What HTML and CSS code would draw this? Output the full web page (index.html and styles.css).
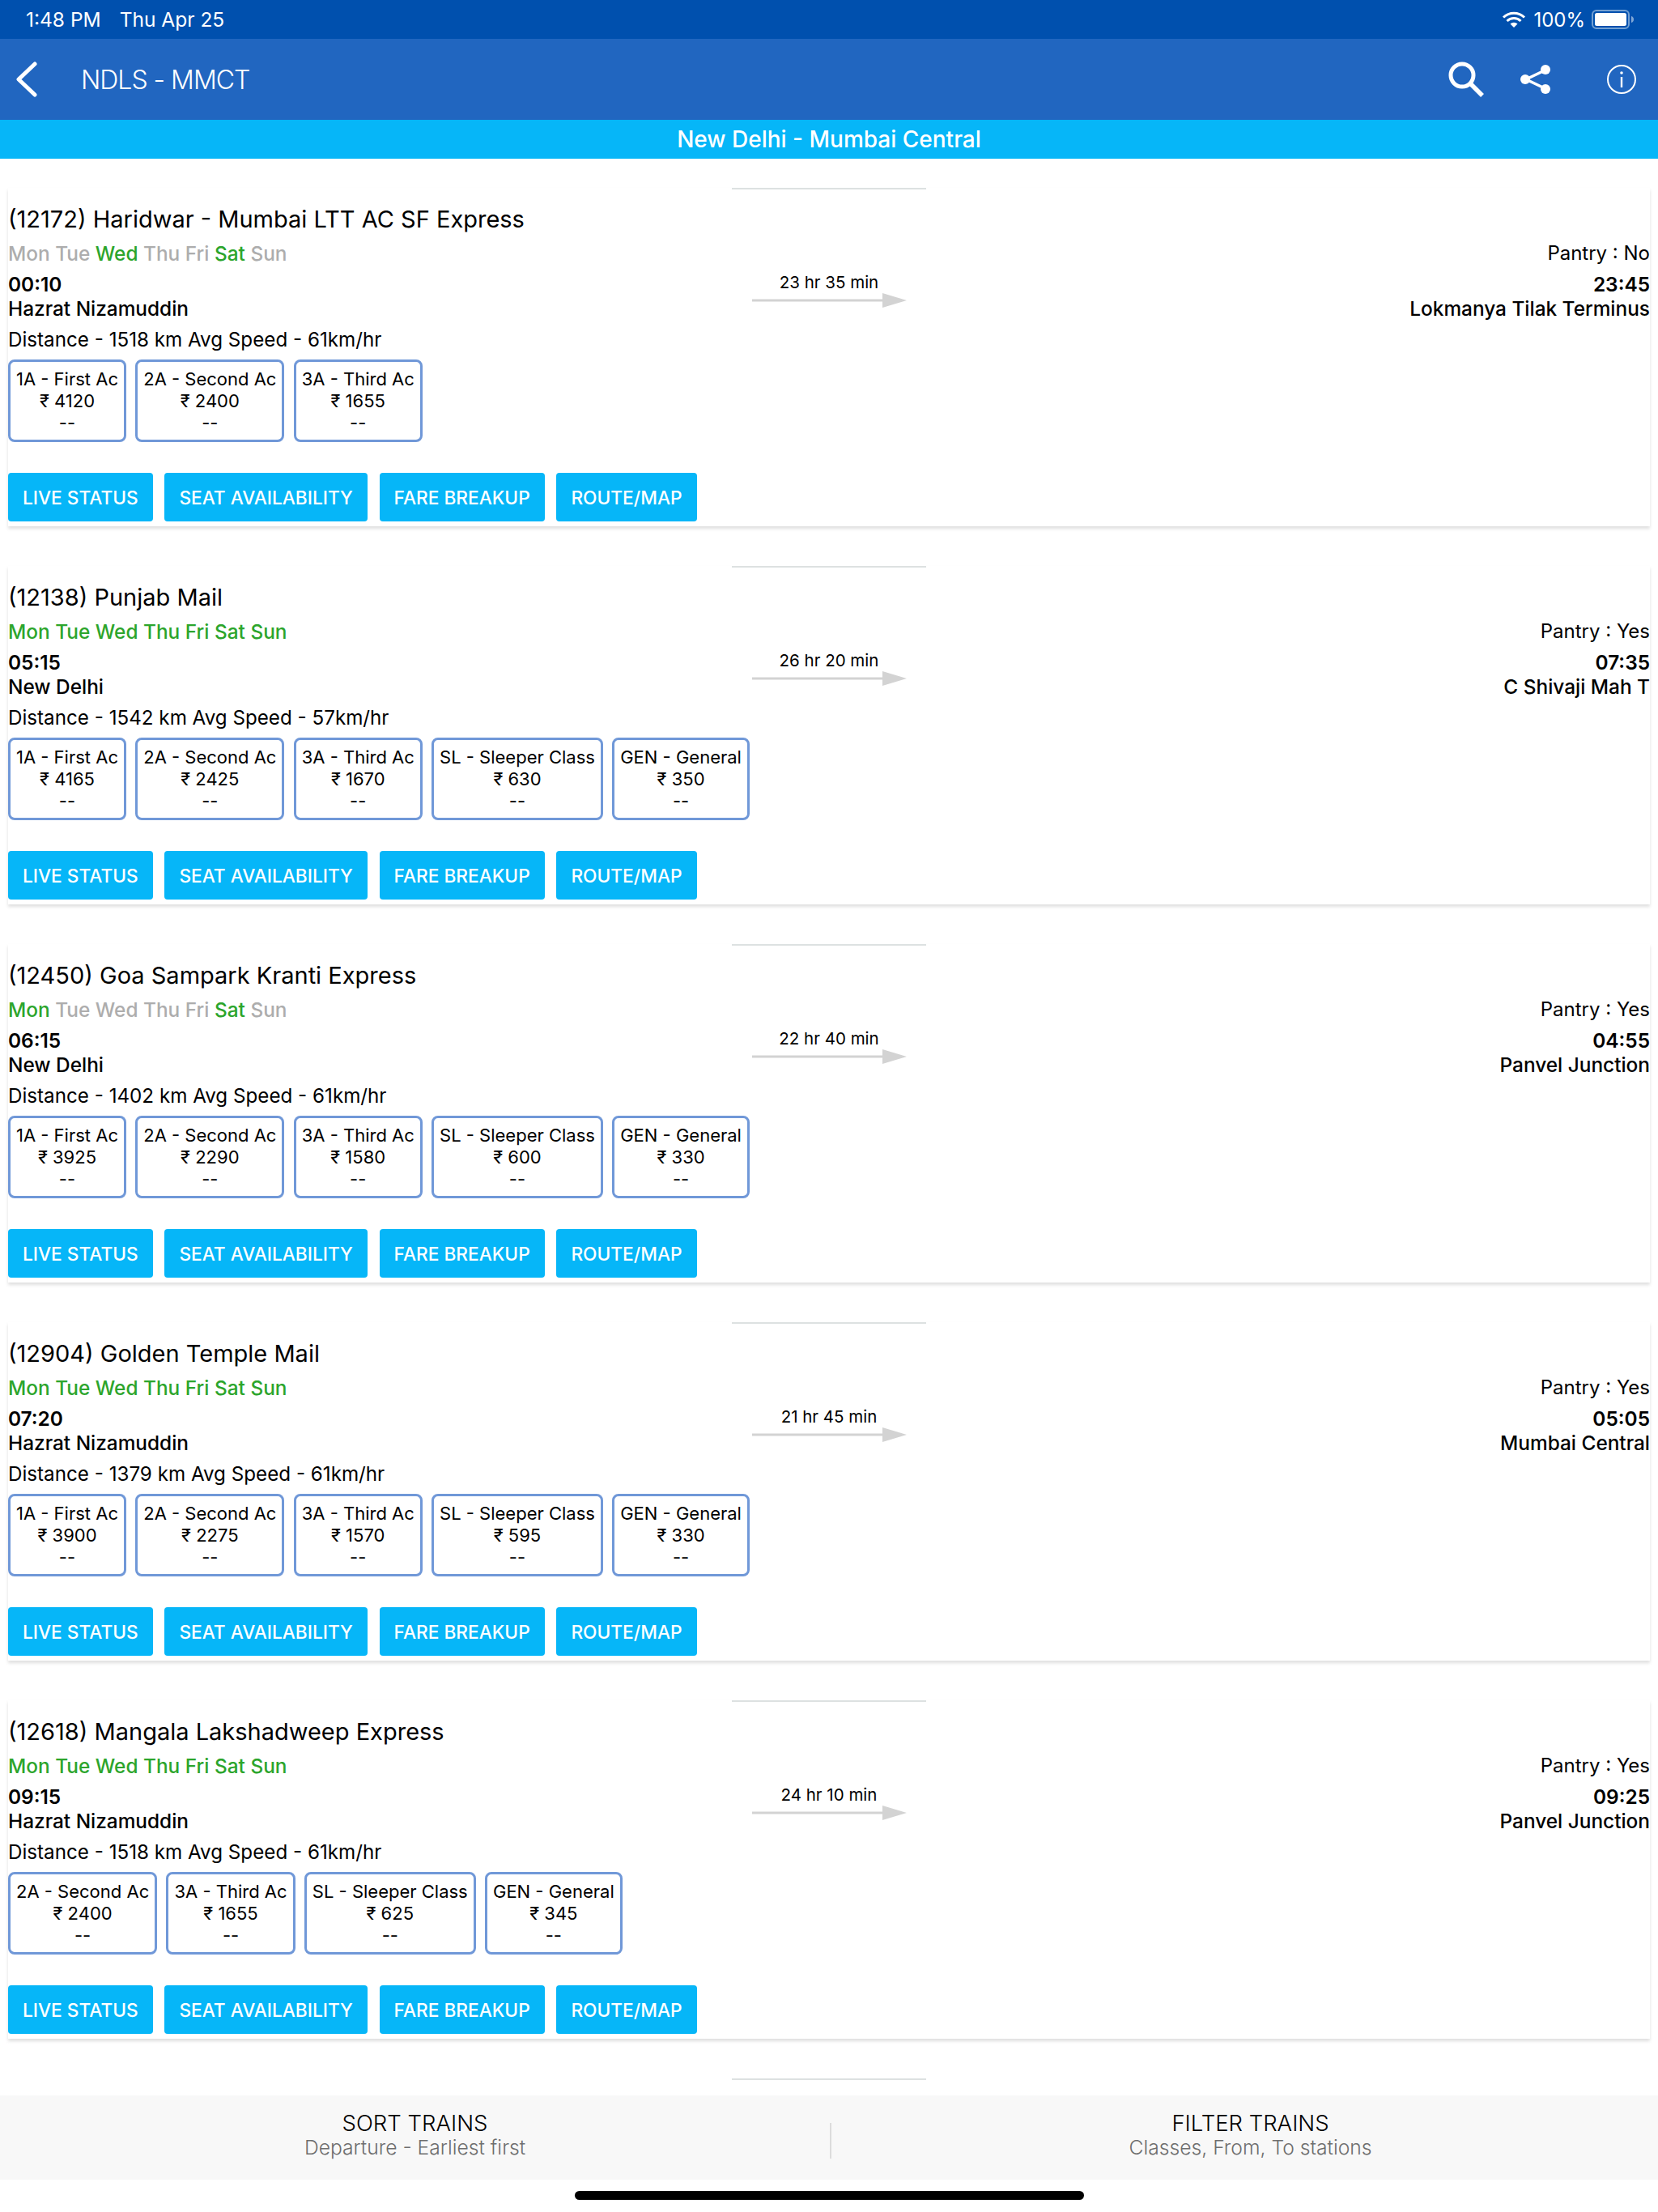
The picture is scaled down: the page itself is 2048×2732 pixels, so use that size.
FILE: index.html
```html
<!DOCTYPE html>
<html lang="en">
<head>
<meta charset="utf-8">
<title>NDLS - MMCT</title>
<link rel="stylesheet" href="styles.css">
</head>
<body>
<div class="app">
  <div class="status">
    <span class="status-time">1:48 PM</span><span class="status-date">Thu Apr 25</span>
    <span class="status-right">
      <svg class="wifi" width="30" height="22" viewBox="0 0 30 22"><path d="M2 8.5a18.5 18.5 0 0 1 26 0M6.500 13a12 12 0 0 1 17 0" fill="none" stroke="#fff" stroke-width="3"/><path d="M10.500 16.500a6.500 6.500 0 0 1 9 0L15 21z" fill="#fff"/></svg>
      <span class="battery-pct">100%</span>
      <svg width="52" height="24" viewBox="0 0 52 24"><rect x="1" y="1" width="45" height="22" rx="5" fill="none" stroke="#fff" stroke-opacity=".45" stroke-width="2"/><rect x="4" y="4" width="39" height="16" rx="2.500" fill="#fff"/><path d="M49 8c2 .5 3 2 3 4s-1 3.500-3 4z" fill="#fff" fill-opacity=".5"/></svg>
    </span>
  </div>
  <div class="nav">
    <svg class="back" width="26" height="44" viewBox="0 0 26 44"><path d="M23 3 3 22l20 19" fill="none" stroke="#fff" stroke-width="5" stroke-linecap="round" stroke-linejoin="round"/></svg>
    <span class="nav-title">NDLS - MMCT</span>
    <svg class="nav-search" width="48" height="48" viewBox="0 0 48 48"><circle cx="20" cy="19" r="14" fill="none" stroke="#fff" stroke-width="5"/><path d="M30 29l15 15" stroke="#fff" stroke-width="5.500"/></svg>
    <svg class="nav-share" width="40" height="38" viewBox="0 0 40 38"><path d="M33 7 8 19l25 12" fill="none" stroke="#fff" stroke-width="3.500"/><circle cx="32" cy="7" r="6" fill="#fff"/><circle cx="7" cy="19" r="6" fill="#fff"/><circle cx="32" cy="31" r="6" fill="#fff"/></svg>
    <svg class="nav-info" width="38" height="38" viewBox="0 0 38 38"><circle cx="19" cy="19" r="17" fill="none" stroke="#fff" stroke-width="2"/><rect x="17.800" y="16" width="2.400" height="13" fill="#fff"/><circle cx="19" cy="11" r="1.800" fill="#fff"/></svg>
  </div>
  <div class="band">New Delhi - Mumbai Central</div>

  <div class="list">
    <article class="card">
      <div class="rule"></div>
      <h2 class="title">(12172) Haridwar - Mumbai LTT AC SF Express</h2>
      <div class="meta">
        <div class="side">
          <div class="days"><span>Mon</span> <span>Tue</span> <span class="on">Wed</span> <span>Thu</span> <span>Fri</span> <span class="on">Sat</span> <span>Sun</span></div>
          <div class="time">00:10</div>
          <div class="station">Hazrat Nizamuddin</div>
        </div>
        <div class="duration"><span>23 hr 35 min</span><svg class="arrow" width="191" height="18" viewBox="0 0 191 18"><path d="M0 7.500h161V0l30 9-30 9v-7.500H0z" fill="#d3d3d3"/></svg></div>
        <div class="side end">
          <div class="pantry">Pantry : No</div>
          <div class="time">23:45</div>
          <div class="station">Lokmanya Tilak Terminus</div>
        </div>
      </div>
      <div class="distance">Distance - 1518 km Avg Speed - 61km/hr</div>
      <div class="chips">
        <div class="chip">1A - First Ac<br>₹ 4120<br>--</div>
        <div class="chip">2A - Second Ac<br>₹ 2400<br>--</div>
        <div class="chip">3A - Third Ac<br>₹ 1655<br>--</div>
      </div>
      <div class="actions"><a class="btn">LIVE STATUS</a><a class="btn">SEAT AVAILABILITY</a><a class="btn">FARE BREAKUP</a><a class="btn">ROUTE/MAP</a></div>
    </article>

    <article class="card">
      <div class="rule"></div>
      <h2 class="title">(12138) Punjab Mail</h2>
      <div class="meta">
        <div class="side">
          <div class="days"><span class="on">Mon</span> <span class="on">Tue</span> <span class="on">Wed</span> <span class="on">Thu</span> <span class="on">Fri</span> <span class="on">Sat</span> <span class="on">Sun</span></div>
          <div class="time">05:15</div>
          <div class="station">New Delhi</div>
        </div>
        <div class="duration"><span>26 hr 20 min</span><svg class="arrow" width="191" height="18" viewBox="0 0 191 18"><path d="M0 7.500h161V0l30 9-30 9v-7.500H0z" fill="#d3d3d3"/></svg></div>
        <div class="side end">
          <div class="pantry">Pantry : Yes</div>
          <div class="time">07:35</div>
          <div class="station">C Shivaji Mah T</div>
        </div>
      </div>
      <div class="distance">Distance - 1542 km Avg Speed - 57km/hr</div>
      <div class="chips">
        <div class="chip">1A - First Ac<br>₹ 4165<br>--</div>
        <div class="chip">2A - Second Ac<br>₹ 2425<br>--</div>
        <div class="chip">3A - Third Ac<br>₹ 1670<br>--</div>
        <div class="chip">SL - Sleeper Class<br>₹ 630<br>--</div>
        <div class="chip">GEN - General<br>₹ 350<br>--</div>
      </div>
      <div class="actions"><a class="btn">LIVE STATUS</a><a class="btn">SEAT AVAILABILITY</a><a class="btn">FARE BREAKUP</a><a class="btn">ROUTE/MAP</a></div>
    </article>

    <article class="card">
      <div class="rule"></div>
      <h2 class="title">(12450) Goa Sampark Kranti Express</h2>
      <div class="meta">
        <div class="side">
          <div class="days"><span class="on">Mon</span> <span>Tue</span> <span>Wed</span> <span>Thu</span> <span>Fri</span> <span class="on">Sat</span> <span>Sun</span></div>
          <div class="time">06:15</div>
          <div class="station">New Delhi</div>
        </div>
        <div class="duration"><span>22 hr 40 min</span><svg class="arrow" width="191" height="18" viewBox="0 0 191 18"><path d="M0 7.500h161V0l30 9-30 9v-7.500H0z" fill="#d3d3d3"/></svg></div>
        <div class="side end">
          <div class="pantry">Pantry : Yes</div>
          <div class="time">04:55</div>
          <div class="station">Panvel Junction</div>
        </div>
      </div>
      <div class="distance">Distance - 1402 km Avg Speed - 61km/hr</div>
      <div class="chips">
        <div class="chip">1A - First Ac<br>₹ 3925<br>--</div>
        <div class="chip">2A - Second Ac<br>₹ 2290<br>--</div>
        <div class="chip">3A - Third Ac<br>₹ 1580<br>--</div>
        <div class="chip">SL - Sleeper Class<br>₹ 600<br>--</div>
        <div class="chip">GEN - General<br>₹ 330<br>--</div>
      </div>
      <div class="actions"><a class="btn">LIVE STATUS</a><a class="btn">SEAT AVAILABILITY</a><a class="btn">FARE BREAKUP</a><a class="btn">ROUTE/MAP</a></div>
    </article>

    <article class="card">
      <div class="rule"></div>
      <h2 class="title">(12904) Golden Temple Mail</h2>
      <div class="meta">
        <div class="side">
          <div class="days"><span class="on">Mon</span> <span class="on">Tue</span> <span class="on">Wed</span> <span class="on">Thu</span> <span class="on">Fri</span> <span class="on">Sat</span> <span class="on">Sun</span></div>
          <div class="time">07:20</div>
          <div class="station">Hazrat Nizamuddin</div>
        </div>
        <div class="duration"><span>21 hr 45 min</span><svg class="arrow" width="191" height="18" viewBox="0 0 191 18"><path d="M0 7.500h161V0l30 9-30 9v-7.500H0z" fill="#d3d3d3"/></svg></div>
        <div class="side end">
          <div class="pantry">Pantry : Yes</div>
          <div class="time">05:05</div>
          <div class="station">Mumbai Central</div>
        </div>
      </div>
      <div class="distance">Distance - 1379 km Avg Speed - 61km/hr</div>
      <div class="chips">
        <div class="chip">1A - First Ac<br>₹ 3900<br>--</div>
        <div class="chip">2A - Second Ac<br>₹ 2275<br>--</div>
        <div class="chip">3A - Third Ac<br>₹ 1570<br>--</div>
        <div class="chip">SL - Sleeper Class<br>₹ 595<br>--</div>
        <div class="chip">GEN - General<br>₹ 330<br>--</div>
      </div>
      <div class="actions"><a class="btn">LIVE STATUS</a><a class="btn">SEAT AVAILABILITY</a><a class="btn">FARE BREAKUP</a><a class="btn">ROUTE/MAP</a></div>
    </article>

    <article class="card">
      <div class="rule"></div>
      <h2 class="title">(12618) Mangala Lakshadweep Express</h2>
      <div class="meta">
        <div class="side">
          <div class="days"><span class="on">Mon</span> <span class="on">Tue</span> <span class="on">Wed</span> <span class="on">Thu</span> <span class="on">Fri</span> <span class="on">Sat</span> <span class="on">Sun</span></div>
          <div class="time">09:15</div>
          <div class="station">Hazrat Nizamuddin</div>
        </div>
        <div class="duration"><span>24 hr 10 min</span><svg class="arrow" width="191" height="18" viewBox="0 0 191 18"><path d="M0 7.500h161V0l30 9-30 9v-7.500H0z" fill="#d3d3d3"/></svg></div>
        <div class="side end">
          <div class="pantry">Pantry : Yes</div>
          <div class="time">09:25</div>
          <div class="station">Panvel Junction</div>
        </div>
      </div>
      <div class="distance">Distance - 1518 km Avg Speed - 61km/hr</div>
      <div class="chips">
        <div class="chip">2A - Second Ac<br>₹ 2400<br>--</div>
        <div class="chip">3A - Third Ac<br>₹ 1655<br>--</div>
        <div class="chip">SL - Sleeper Class<br>₹ 625<br>--</div>
        <div class="chip">GEN - General<br>₹ 345<br>--</div>
      </div>
      <div class="actions"><a class="btn">LIVE STATUS</a><a class="btn">SEAT AVAILABILITY</a><a class="btn">FARE BREAKUP</a><a class="btn">ROUTE/MAP</a></div>
    </article>

    <div class="rule"></div>
  </div>

  <div class="bottom">
    <div class="bottom-cell"><div class="bottom-title">SORT TRAINS</div><div class="bottom-sub">Departure - Earliest first</div></div>
    <div class="bottom-sep"></div>
    <div class="bottom-cell bottom-cell-end"><div class="bottom-title">FILTER TRAINS</div><div class="bottom-sub">Classes, From, To stations</div></div>
  </div>
  <div class="home"><div class="home-bar"></div></div>
</div>
</body>
</html>
```

FILE: styles.css
```css
* { box-sizing: border-box; }
html, body { margin: 0; padding: 0; background: #fff; }
body { font-family: Inter, "Liberation Sans", sans-serif; color: #000; }
.app { width: 2048px; height: 2732px; display: flex; flex-direction: column; overflow: hidden; }

.status { height: 48px; flex: none; background: #0050ae; color: #fff; display: flex; align-items: center; padding: 0 30px 0 32px; font-size: 24.5px; }
.status-date { margin-left: 23px; }
.status-right { margin-left: auto; display: flex; align-items: center; gap: 8px; font-size: 24px; }
.wifi { margin-right: 1px; }

.nav { height: 100px; flex: none; background: #2166c0; color: #fff; display: flex; align-items: center; }
.back { margin-left: 20px; }
.nav-title { margin-left: 54px; font-size: 32px; font-weight: 300; letter-spacing: -1px; flex: 1; }
.nav-search { margin-right: 43px; }
.nav-share { margin-right: 67px; }
.nav-info { margin-right: 26px; }

.band { height: 48px; flex: none; background: #06b6f8; color: #fff; font-size: 28px; font-weight: 500; display: flex; align-items: center; justify-content: center; }

.list { flex: 1; min-height: 0; padding-top: 36px; overflow: hidden; }
.rule { width: 240px; height: 2px; background: #dde1e1; margin: 0 auto; }

.card { margin: 0 10px 49px; height: 418px; display: flex; flex-direction: column; background: #fff; box-shadow: 0 3px 4px rgba(0, 0, 0, .13); }
.title { margin: 19px 0 0; font-size: 29px; line-height: 36px; font-weight: 400; white-space: nowrap; }
.meta { display: grid; grid-template-columns: 1fr 191px 1fr; margin-top: 7px; }
.side { display: flex; flex-direction: column; }
.side.end { text-align: right; }
.days { font-size: 24.4px; line-height: 34px; font-weight: 500; color: #adadad; }
.days .on { color: #2ca52c; }
.pantry { font-size: 24px; line-height: 34px; }
.time { margin-top: 8px; font-size: 24.4px; line-height: 26px; font-weight: 600; }
.station { margin-top: 4px; font-size: 24.4px; line-height: 26px; font-weight: 550; }
.duration { display: flex; flex-direction: column; align-items: center; padding-top: 40px; font-size: 20.5px; line-height: 26px; }
.arrow { display: block; }
.distance { margin-top: 12px; font-size: 24.2px; line-height: 28px; }

.chips { display: flex; gap: 11.25px; margin-top: 10px; }
.chip { height: 102px; border: 3px solid #7098d8; border-radius: 8px; padding: 8px 7px 0; text-align: center; font-size: 22px; line-height: 27px; white-space: nowrap; }

.actions { display: flex; gap: 14.7px; margin-top: 38px; }
.btn { height: 60px; padding: 0 18px; background: #06b6f8; color: #fff; border-radius: 4px; display: flex; align-items: center; font-size: 22.7px; font-weight: 500; }

.bottom { height: 104px; flex: none; background: #f8f8f8; display: flex; align-items: center; }
.bottom-cell { flex: 0 0 1025px; text-align: center; padding-bottom: 11px; }
.bottom-cell-end { flex: 1; padding-left: 14px; }
.bottom-sep { width: 2px; height: 44px; margin-top: 8px; background: #dcdcdc; }
.bottom-title { font-size: 27.5px; line-height: 34px; font-weight: 300; }
.bottom-sub { font-size: 24.7px; line-height: 26px; font-weight: 300; color: #6e6e6e; }

.home { height: 40px; flex: none; padding-top: 14px; display: flex; justify-content: center; }
.home-bar { width: 629px; height: 11px; border-radius: 6px; background: #000; }
```
